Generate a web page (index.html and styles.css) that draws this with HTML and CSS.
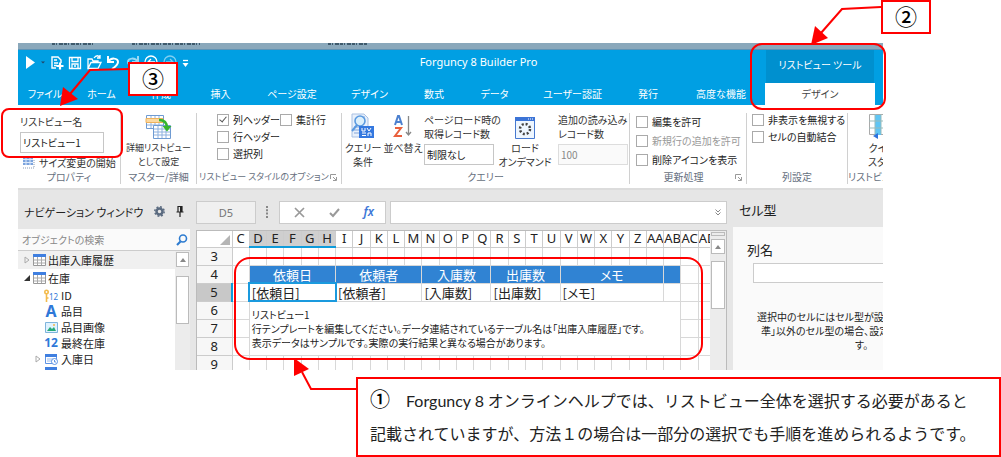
FILE: index.html
```
<!DOCTYPE html>
<html lang="ja">
<head>
<meta charset="utf-8">
<title>Forguncy 8 Builder Pro</title>
<link rel="stylesheet" href="styles.css">
</head>
<body>
<main class="stage">
<div class="app">
  <div class="behind"><svg width="360" height="4" viewBox="0 0 360 4" stroke="#3f5a6c" stroke-width="2" stroke-dasharray="3 1 1 2 4 1"><path d="M34 1h43M114 1h68M310 1h40"/></svg></div>
  <header class="titlebar">
    <div class="qat">
      <svg width="173" height="26" viewBox="0 0 173 26" fill="none" stroke="#fff" stroke-width="1.3">
        <path d="M8 6v13l9-6.500z" fill="#fff" stroke="none"/><path d="M23 11.500h4l-2 2z" fill="#246" stroke="none"/>
        <path d="M38 18h-4V7h6l3 3v3M36 10h3M36 13h4M36 15.500h3" stroke-width="1.400"/><path d="M42 12.500v7M38.500 16h7" stroke-width="2.200"/>
        <path d="M51.500 7.500h11v11h-11zM54 7.500v4h6v-4M54 18v-4h6v4M56 16h2"/>
        <path d="M70 18.500V9h4l1 2h5v2M70 18.500l3-6h10l-3 6zM76 8c2-3 5-3 6 0M82 5v3h-3"/>
        <path d="M90 12c3-5 10-4 10 0 0 3-3 5-6 7M90 6v6h6" stroke-width="2"/>
        <path d="M120 12c-3-5-10-4-10 0 0 3 3 5 6 7M120 6v6h-6" opacity=".6" stroke-width="2"/>
        <circle cx="133" cy="12" r="6"/><path d="M137 12h-7M133 9l-3 3 3 3"/>
        <g opacity=".5"><circle cx="152" cy="12" r="6"/><path d="M148 12h7M152 9l3 3-3 3"/></g>
        <path d="M165 10.500h5" /><path d="M164.500 13h6l-3 4z" fill="#fff" stroke="none"/>
      </svg>
    </div>
    <h1 class="title">Forguncy 8 Builder Pro</h1>
    <div class="context">リストビュー ツール</div>
  </header>
  <nav class="tabs">
    <button>ファイル</button><button>ホーム</button><button>作成</button><button>挿入</button><button>ページ設定</button><button>デザイン</button><button>数式</button><button>データ</button><button>ユーザー認証</button><button>発行</button><button>高度な機能</button><button class="current">デザイン</button>
  </nav>

  <section class="ribbon">
    <div class="group g-prop">
      <div class="content stack">
        <label for="lvname">リストビュー名</label>
        <input id="lvname" class="box" value="リストビュー1">
        <button class="inline"><svg width="13" height="12" viewBox="0 0 13 12"><path d="M1 0h10v8H1z" fill="#7ba3dd"/><path d="M1 2.500h10M1 5.500h10M4 0v8M8 0v8" stroke="#dbe8fa"/><path d="M1 11h11V2" fill="none" stroke="#8a9bb5" stroke-dasharray="1 1"/></svg>サイズ変更の開始</button>
      </div>
      <div class="caption">プロパティ</div>
    </div>
    <div class="group g-master">
      <div class="content">
        <button class="big"><svg width="27" height="27" viewBox="0 0 27 27"><path d="M1.500 2.500h17v13h-17z" fill="#fff" stroke="#6f9bd2"/><path d="M2 6h16M2 12h16M6 3v12M10 3v12M14 3v12" stroke="#8fb2df"/><path d="M1 5.500h17v4H1z" fill="#fcd9a0" stroke="#eeb25d"/><path d="M8.500 12.500h17v13h-17z" fill="#fff" stroke="#6f9bd2"/><path d="M9 16h16M9 19h16M9 22h16M13 13v12M17 13v12M21 13v12" stroke="#8fb2df"/><path d="M14 7c6 0 8 3 8 8" fill="none" stroke="#35b52d" stroke-width="2.500"/><path d="M17.500 13h9L22 18.500z" fill="#35b52d"/></svg><span>詳細リストビュー<br>として設定</span></button>
      </div>
      <div class="caption">マスター/詳細</div>
    </div>
    <div class="group g-style">
      <div class="content checks">
        <div class="pair"><label><input type="checkbox" checked>列ヘッダー</label><label><input type="checkbox">集計行</label></div>
        <label><input type="checkbox">行ヘッダー</label>
        <label><input type="checkbox">選択列</label>
      </div>
      <div class="caption launch">リストビュー スタイルのオプション<svg width="7" height="7" viewBox="0 0 7 7" fill="none" stroke="#999"><path d="M.5 5V.5H6M3 3l3 3M6.500 3v3.500H3"/></svg></div>
    </div>
    <div class="group g-query">
      <div class="content cols">
        <button class="big"><svg width="26" height="27" viewBox="0 0 26 27"><path d="M2 1h12l4 4v19H2z" fill="#e8f0fb" stroke="#a9c0e2"/><path d="M4 14h8M4 17h6M4 20h6M12 4h3" stroke="#83a6da"/><circle cx="10" cy="8" r="5" fill="#dceffb" stroke="#5b9ae0" stroke-width="1.600"/><path d="M7 12l-5 6" stroke="#5b9ae0" stroke-width="2"/><path d="M9 13h15v12H9z" fill="#3478df"/><path d="M12 15v3h3v-3M17 15l2 3 2-3M12 20h4M12 22.500h4M18 23v-3h3v3" fill="none" stroke="#fff"/></svg><span>クエリー<br>条件</span></button>
        <button class="big"><svg width="20" height="27" viewBox="0 0 20 27" fill="none"><path d="M2 12L5 3h1l3 9M3 9h5" stroke="#4c80cf" stroke-width="2"/><path d="M2 15h6l-6 8h7" stroke="#e9603d" stroke-width="2"/><path d="M15.500 3v19M13 19l2.500 3 2.500-3" stroke="#888" stroke-width="1.300"/></svg><span>並べ替え</span></button>
        <div class="stack"><label for="load">ページロード時の<br>取得レコード数</label><input id="load" class="box" value="制限なし"></div>
        <button class="big"><svg width="22" height="27" viewBox="0 0 22 27"><path d="M1.500 4.500h19v21h-19z" fill="#eef6ff" stroke="#4779cf"/><path d="M1 4h20v4H1z" fill="#3c74d6"/><path d="M14 6h1M16 6h1M18 6h1" stroke="#fff"/><circle cx="11" cy="16" r="5" fill="none" stroke="#444" stroke-width="2.500" stroke-dasharray="2 1.930"/></svg><span>ロード<br>オンデマンド</span></button>
        <div class="stack"><label for="more">追加の読み込み<br>レコード数</label><input id="more" class="box" value="100" disabled></div>
      </div>
      <div class="caption">クエリー</div>
    </div>
    <div class="group g-update">
      <div class="content checks loose">
        <label><input type="checkbox">編集を許可</label>
        <label class="dim"><input type="checkbox" disabled>新規行の追加を許可</label>
        <label><input type="checkbox">削除アイコンを表示</label>
      </div>
      <div class="caption launch"><span>更新処理</span><svg width="7" height="7" viewBox="0 0 7 7" fill="none" stroke="#999"><path d="M.5 5V.5H6M3 3l3 3M6.500 3v3.500H3"/></svg></div>
    </div>
    <div class="group g-column">
      <div class="content checks">
        <label><input type="checkbox">非表示を無視する</label>
        <label><input type="checkbox">セルの自動結合</label>
      </div>
      <div class="caption">列設定</div>
    </div>
    <div class="group g-last">
      <div class="content">
        <button class="big"><svg width="26" height="27" viewBox="0 0 26 27"><path d="M1.500 1.500h23v20h-23z" fill="#fff" stroke="#aaa"/><path d="M7 2h6v20H7z" fill="#5fc5f4"/><path d="M1 8h24M1 15h24M7 1v20M13 1v20" stroke="#9bb"/><path d="M10 20v6l-5-3z" fill="#2f72dc"/></svg><span>クイック<br>スタイル</span></button>
      </div>
      <div class="caption">リストビュー</div>
    </div>
  </section>

  <div class="work">
    <aside class="nav">
      <h2>ナビゲーション ウィンドウ
        <svg width="11" height="11" viewBox="0 0 11 11"><circle cx="5.500" cy="5.500" r="3" fill="none" stroke="#5b6b80" stroke-width="2.500"/><circle cx="5.500" cy="5.500" r="4.700" fill="none" stroke="#5b6b80" stroke-width="1.500" stroke-dasharray="1.900 1.790"/></svg>
        <svg width="8" height="11" viewBox="0 0 8 11"><path d="M2 .5h4V6H2zM.5 6h7M4 6v5" fill="none" stroke="#222" stroke-width="1.200"/><path d="M4 1h2v5H4z" fill="#222"/></svg></h2>
      <div class="search"><input placeholder="オブジェクトの検索" aria-label="オブジェクトの検索"><svg width="12" height="12" viewBox="0 0 12 12" fill="none" stroke="#2d7bd0"><circle cx="7" cy="4.500" r="3.500" stroke-width="1.600"/><path d="M4.500 7.500L1 11" stroke-width="2.200"/></svg></div>
      <div class="treewrap">
        <ul class="tree">
          <li class="top hot"><svg class="tw" width="6" height="8" viewBox="0 0 6 8"><path d="M1 1v6l4-3z" fill="none" stroke="#aaa"/></svg><svg width="13" height="12" viewBox="0 0 13 12"><path d="M.5.5h12v11H.5z" fill="#fff" stroke="#999"/><path d="M0 0h13v3H0z" fill="#3f7fe0"/><path d="M1 6h11M1 9h11M4.500 3v8M8.500 3v8" stroke="#aaa"/></svg>出庫入庫履歴</li>
          <li class="top"><svg class="tw" width="6" height="8" viewBox="0 0 6 8"><path d="M6 1v6H0z" fill="#333"/></svg><svg width="13" height="12" viewBox="0 0 13 12"><path d="M.5.5h12v11H.5z" fill="#fff" stroke="#999"/><path d="M0 0h13v3H0z" fill="#3f7fe0"/><path d="M1 6h11M1 9h11M4.500 3v8M8.500 3v8" stroke="#aaa"/></svg>在庫</li>
          <li><i class="key"><svg width="5" height="13" viewBox="0 0 5 13"><circle cx="2.500" cy="3" r="1.700" fill="none" stroke="#f3bb4c" stroke-width="1.600"/><path d="M2.500 5v8M2.500 9h2" stroke="#f3bb4c" stroke-width="1.600"/></svg><small>12</small></i>ID</li>
          <li><i class="glyph">A</i>品目</li>
          <li><i><svg width="13" height="11" viewBox="0 0 13 11"><path d="M.5.5h12v10H.5z" fill="#dff2ff" stroke="#7fb4dc"/><path d="M2 9l3-4 2 2 2-2 2 4z" fill="#27aa78"/><circle cx="9" cy="3" r="1" fill="#f5b547"/></svg></i>品目画像</li>
          <li><i class="num">12</i>最終在庫</li>
          <li><svg class="tw" width="6" height="8" viewBox="0 0 6 8"><path d="M1 1v6l4-3z" fill="none" stroke="#aaa"/></svg><i><svg width="13" height="12" viewBox="0 0 13 12"><path d="M.5 1.500h11v9H.5z" fill="#fff" stroke="#5d93e4"/><path d="M0 1h12v3H0z" fill="#3f7fe0"/><path d="M2 6h6M2 8h5" stroke="#9bbced"/><circle cx="9.500" cy="8.500" r="3" fill="#fff" stroke="#5d93e4"/><path d="M9.500 7v2h1.500" fill="none" stroke="#5d93e4"/></svg></i>入庫日</li>
          <li class="cut"><i><svg width="12" height="3" viewBox="0 0 12 3"><path d="M0 0h12v3H0z" fill="#3f7fe0"/></svg></i></li>
        </ul>
        <div class="scroll"><button aria-label="上へ"></button><div class="thumb"></div></div>
      </div>
    </aside>

    <section class="sheet">
      <div class="formula">
        <input class="addr" value="D5" aria-label="セル">
        <svg width="3" height="12" viewBox="0 0 3 12" fill="#888"><path d="M0 0h2v2H0zM0 3.300h2v2H0zM0 6.600h2v2H0zM0 10h2v2H0z"/></svg>
        <div class="fx"><svg width="11" height="11" viewBox="0 0 11 11" fill="none" stroke="#999" stroke-width="1.700"><path d="M1 1l9 9M10 1l-9 9"/></svg><svg width="11" height="11" viewBox="0 0 11 11" fill="none" stroke="#999" stroke-width="2"><path d="M1 6l3 3 6-7"/></svg><button>fx</button></div>
        <div class="entry"><input aria-label="数式"><svg width="6" height="7" viewBox="0 0 6 7" fill="none" stroke="#888"><path d="M.5.5L3 3 5.500.5M.5 3.500L3 6l2.500-2.500"/></svg></div>
      </div>
      <div class="gridwrap">
        <div class="gridclip">
        <table class="grid">
          <colgroup><col class="rh"><col span="28"></colgroup>
          <thead><tr><th class="corner"><svg width="10" height="10" viewBox="0 0 10 10"><path d="M10 0v10H0z" fill="#b5b5b5"/></svg></th><th>C</th><th class="on">D</th><th class="on">E</th><th class="on">F</th><th class="on">G</th><th class="on">H</th><th>I</th><th>J</th><th>K</th><th>L</th><th>M</th><th>N</th><th>O</th><th>P</th><th>Q</th><th>R</th><th>S</th><th>T</th><th>U</th><th>V</th><th>W</th><th>X</th><th>Y</th><th>Z</th><th>AA</th><th>AB</th><th>AC</th><th>AD</th></tr></thead>
          <tbody>
            <tr><th>3</th><td></td><td></td><td></td><td></td><td></td><td></td><td></td><td></td><td></td><td></td><td></td><td></td><td></td><td></td><td></td><td></td><td></td><td></td><td></td><td></td><td></td><td></td><td></td><td></td><td></td><td></td><td></td><td></td></tr>
            <tr><th>4</th><td></td><td colspan="5" class="head">依頼日</td><td colspan="5" class="head">依頼者</td><td colspan="4" class="head">入庫数</td><td colspan="4" class="head">出庫数</td><td colspan="6" class="head">メモ</td><td class="head"></td><td></td><td></td></tr>
            <tr><th class="rowon">5</th><td></td><td colspan="5" class="active">[依頼日]</td><td colspan="5">[依頼者]</td><td colspan="4">[入庫数]</td><td colspan="4">[出庫数]</td><td colspan="6">[メモ]</td><td></td><td></td><td></td></tr>
            <tr><th>6</th><td></td><td colspan="25" rowspan="3" class="note">リストビュー1<br>行テンプレートを編集してください。データ連結されているテーブル名は「出庫入庫履歴」です。<br>表示データはサンプルです。実際の実行結果と異なる場合があります。</td><td></td><td></td></tr>
            <tr><th>7</th><td></td><td></td><td></td></tr>
            <tr><th>8</th><td></td><td></td><td></td></tr>
            <tr><th>9</th><td></td><td></td><td></td><td></td><td></td><td></td><td></td><td></td><td></td><td></td><td></td><td></td><td></td><td></td><td></td><td></td><td></td><td></td><td></td><td></td><td></td><td></td><td></td><td></td><td></td><td></td><td></td><td></td></tr>
          </tbody>
        </table>
        </div>
        <div class="scroll vs"><div class="split"></div><button aria-label="上へ"></button><div class="thumb"></div></div>
      </div>
    </section>

    <aside class="celltype">
      <h2>セル型</h2>
      <div class="pane">
        <label for="colname">列名</label>
        <input id="colname">
        <p><span>選択中のセルにはセル型が設定</span><span class="l2">準」以外のセル型の場合、設定</span><span class="l3">す。</span></p>
      </div>
    </aside>
  </div>
</div>

<div class="mark m-name"></div>
<div class="mark m-design"></div>
<div class="mark m-list"></div>
<svg class="arrow a3" width="72" height="44" viewBox="0 0 72 44"><path d="M71 6L32 7 12 31" fill="none" stroke="red" stroke-width="2"/><path d="M2 43L5 24l15 12z" fill="red"/></svg>
<svg class="arrow a2" width="72" height="44" viewBox="0 0 72 44"><path d="M72 6L33 8 12 32" fill="none" stroke="red" stroke-width="2"/><path d="M2 44L6 25l13 12z" fill="red"/></svg>
<svg class="arrow a1" width="66" height="34" viewBox="0 0 66 34"><path d="M66 31H18L9 14" fill="none" stroke="red" stroke-width="2"/><path d="M1 0v18l15-7z" fill="red"/></svg>
<div class="tag t3">③</div>
<div class="tag t2">②</div>
<div class="callout"><b>①</b><span class="latin">Forguncy 8</span> オンラインヘルプでは、リストビュー全体を選択する必要があると<br>記載されていますが、方法１の場合は一部分の選択でも手順を進められるようです。</div>
</main>
</body>
</html>
```
FILE: styles.css
```
* { box-sizing: border-box; }
body { margin: 0; background: #fff; color: #333; font: 10px/14px "Noto Sans CJK JP", sans-serif; }
button, input { font: inherit; color: inherit; border: 0; padding: 0; margin: 0; background: none; min-width: 0; }
svg { flex: none; }
h1, h2, p, ul { margin: 0; padding: 0; font-weight: normal; }

.stage { position: relative; padding: 43px 118px 0 18px; min-height: 457px; overflow: hidden; }
.app { font-feature-settings: "palt"; white-space: nowrap; overflow: hidden; }
.behind { height: 7px; background: #8aa8bb; border-bottom: 1px solid #5f93b5; }
.behind svg { display: block; }

.titlebar { display: flex; height: 33px; background: #009fe3; color: #fff; }
.qat { width: 173px; }
.title { flex: 1; text-align: center; font: 11px/24px "Noto Sans", sans-serif; }
.context { width: 108px; margin-right: 9px; background: #0090cf; text-align: center; line-height: 30px; }

.tabs { display: grid; grid-template-columns: 54px 59px 60px 59px 84px 71px 58px 63px 93px 58px 1fr 110px; padding-right: 8px; height: 22px; background: #009fe3; color: #fff; line-height: 20px; }
.tabs .current { background: #fff; color: #444; }

.ribbon { display: flex; height: 85px; padding-top: 8px; border-bottom: 2px solid #dcdcdc; background: #fff; }
.group { display: flex; flex-direction: column; flex: none; height: 71px; border-right: 1px solid #d0d0d0; overflow: hidden; }
.content { flex: 1; }
.caption { flex: none; line-height: 14px; text-align: center; color: #666f80; }
.launch { display: flex; align-items: center; justify-content: space-between; padding: 0 4px 0 2px; }
.launch span { flex: 1; text-align: center; }
.g-prop { width: 103px; padding-left: 2px; }
.g-master { width: 76px; }
.g-style { width: 145px; }
.g-style .caption, .g-master .big { font-size: 9px; }
.g-query { width: 288px; }
.g-update { width: 117px; }
.g-column { width: 101px; }
.g-last { flex: 1; width: 0; border: 0; }
.g-last .content { padding-left: 20px; }
.g-last .caption { text-align: left; }
.stack { display: flex; flex-direction: column; align-items: flex-start; }
.box { width: 84px; height: 21px; border: 1px solid #c6c6c6; padding: 0 2px; color: #222; }
.g-prop .content { padding-top: 2px; }
.g-prop .box { margin-top: 3px; }
.g-prop .caption { padding-right: 2px; }
.inline { display: flex; align-items: center; gap: 4px; padding: 3px 2px 0; height: 17px; }
.big { display: flex; flex-direction: column; align-items: center; width: 100%; gap: 1px; }
.big svg { display: block; }
.g-last .big { width: 40px; align-items: flex-start; }
.checks { display: flex; flex-direction: column; gap: 3px; padding: 0 0 0 5px; }
.g-style .checks { padding-left: 20px; }
.checks.loose { gap: 5px; padding: 2px 0 0 6px; }
.checks label { display: flex; align-items: center; gap: 4px; color: #222; height: 14px; }
.checks .dim { color: #999; }
.pair { display: flex; gap: 4px; }
.g-style .pair { gap: 0; }
input[type=checkbox] { appearance: none; display: block; flex: none; width: 12px; height: 12px; border: 1px solid #aaa; background: #fff; }
input[type=checkbox]:checked::after { content: ""; display: block; width: 3px; height: 6px; margin: 0 0 0 3px; border: solid #555; border-width: 0 1px 1px 0; transform: rotate(40deg); }
.cols { display: grid; grid-template-columns: 42px 38px 78px 46px 1fr; padding-left: 0; }
.cols .stack { padding-left: 2px; }
.cols .stack:last-child { padding-left: 12px; }
.cols .box { width: 70px; margin-top: 3px; }
.cols .big:nth-child(4) { width: 50px; }
.box:disabled { color: #888; border-color: #ddd; background: #fafafa; }

.work { display: grid; grid-template-columns: 172px minmax(0, 1fr) 150px; column-gap: 6px; height: 180px; background: #e6e6e6; overflow: hidden; }
h2 { height: 39px; font-size: 13px; line-height: 42px; color: #222; }
.nav h2 { display: flex; align-items: center; gap: 11px; padding: 4px 0 0 6px; font-size: 11px; }
.search { display: flex; align-items: center; height: 22px; padding: 0 2px 0 4px; background: #fafafa; border-bottom: 1px solid #ccc; }
.search input { flex: 1; outline: 0; }
.search input::placeholder { color: #888; opacity: 1; }
.treewrap { display: flex; height: 119px; background: #fff; }
.tree { flex: 1; list-style: none; font-size: 11px; line-height: 16px; color: #222; }
.tree li { display: flex; align-items: center; gap: 3px; height: 16px; padding-left: 26px; }
.tree li.top { height: 18px; padding-left: 6px; gap: 2px; }
.tree li.hot { background: #f0f0f0; }
.tree li.cut { align-items: flex-start; }
.tree .tw { margin-right: 1px; }
.tree li:not(.top) .tw { margin: 0 0 0 -9px; }
.tree i { display: flex; align-items: center; justify-content: center; flex: none; width: 14px; font-style: normal; color: #2f78d8; }
.tree .glyph { font: bold 16px/16px "Noto Sans", sans-serif; }
.tree .num { font: bold 12px/16px "Noto Sans", sans-serif; }
.tree small { font: 8px/8px "Noto Sans", sans-serif; padding-top: 4px; }
.scroll { width: 15px; background: #ececec; padding: 1px; display: flex; flex-direction: column; gap: 9px; }
.scroll button, .thumb { flex: none; height: 15px; background: #fff; border: 1px solid #bbb; }
.scroll button::after { content: ""; display: block; width: 0; margin: 0 auto; border: 3px solid transparent; border-top: 0; border-bottom: 4px solid #888; }
.thumb { height: 48px; }

.formula { display: flex; align-items: center; height: 40px; padding: 4px 0 0; }
.addr { width: 60px; height: 23px; border: 1px solid #ccc; background: #f0f0f0; text-align: center; color: #777; font: 11px "Noto Sans", sans-serif; }
.formula > svg { margin: 0 10px; }
.fx { display: flex; align-items: center; justify-content: space-between; width: 107px; height: 23px; padding: 0 11px 0 14px; border: 1px solid #ccc; background: #fff; }
.fx button { color: #3d78d8; font: italic 12px/14px "Noto Sans", sans-serif; font-weight: 600; }
.entry { display: flex; align-items: center; flex: 1; height: 23px; margin-left: 4px; padding-right: 5px; border: 1px solid #ccc; background: #fff; }
.entry input { flex: 1; outline: 0; }
.gridwrap { display: flex; height: 140px; border: 1px solid #bbb; border-width: 1px 1px 0; background: #fff; }
.gridclip { flex: 1; min-width: 0; overflow: hidden; }
.grid { table-layout: fixed; border-collapse: collapse; width: calc(100% + 6px); font-size: 13px; line-height: 17px; color: #222; }
.rh { width: 35px; }
.grid th, .grid td { height: 18px; padding: 0; border: 1px solid #d8d8d8; border-top: 0; overflow: hidden; font-weight: normal; }
.grid th { font-family: "Noto Sans", sans-serif; font-size: 13px; border-color: #ccc; }
.grid thead th { height: 16px; line-height: 15px; }
.grid tbody th { background: #f7f7f7; border-left: 0; }
.grid .corner { text-align: right; padding-right: 2px; border-left: 0; line-height: 12px; }
.grid .corner svg { vertical-align: bottom; }
.grid .on { background: #cfcfcf; border-bottom: 2px solid #0e9cdc; }
.grid tbody .rowon { background: #c8c8c8; border-right: 2px solid #0e9cdc; }
.grid td { padding-left: 2px; }
.grid .head { background: #3083d3; color: #fff; text-align: center; padding: 0; }
.grid .active { outline: 2px solid #1a9ade; outline-offset: -1px; }
.grid .note { font-size: 10px; line-height: 14px; vertical-align: top; padding: 6px 0 0 2px; background: #fff; }
.vs { width: 16px; gap: 3px; }
.split { height: 4px; border: 1px solid #bbb; }
.vs .thumb { margin-top: 4px; }

.celltype { overflow: hidden; }
.celltype h2 { height: 37px; padding-left: 6px; line-height: 40px; }
.pane { height: 143px; padding-top: 14px; background: #fafafa; color: #222; }
.pane label { display: block; margin-left: 14px; font-size: 13px; line-height: 18px; }
.pane input { display: block; width: 180px; height: 20px; margin: 4px 0 0 20px; border: 1px solid #ccc; background: #fff; }
.pane p { margin: 27px 0 0 24px; font-size: 10px; }
.pane span { display: block; }
.l2 { padding-left: 4px; }
.l3 { padding-left: 98px; }

.mark, .tag, .callout, .arrow { position: absolute; }
.mark { border: 2px solid red; border-radius: 12px; pointer-events: none; }
.m-name { left: 1px; top: 108px; width: 122px; height: 50px; border-radius: 8px; }
.m-design { right: 115px; top: 43px; width: 136px; height: 67px; }
.m-list { left: 234px; right: 298px; top: 257px; height: 103px; border-radius: 16px; }
.tag { width: 50px; height: 34px; border: 2px solid red; background: #fff; color: #000; text-align: center; font-size: 22px; line-height: 27px; font-weight: 500; }
.t3 { left: 128px; top: 62px; }
.t2 { right: 70px; top: 0; }
.arrow { pointer-events: none; }
.a3 { left: 58px; top: 63px; }
.a2 { right: 120px; top: 1px; }
.a1 { left: 293px; top: 358px; }
.callout { left: 356px; right: 0; top: 377px; padding: 5px 0 6px 12px; border: 2px solid red; background: #fff; color: #222; font-size: 16px; line-height: 32px; white-space: nowrap; }
.callout b { margin-right: 16px; color: #000; font-size: 20px; line-height: 20px; font-weight: 500; }
.latin { font-family: Lato, sans-serif; }
```
